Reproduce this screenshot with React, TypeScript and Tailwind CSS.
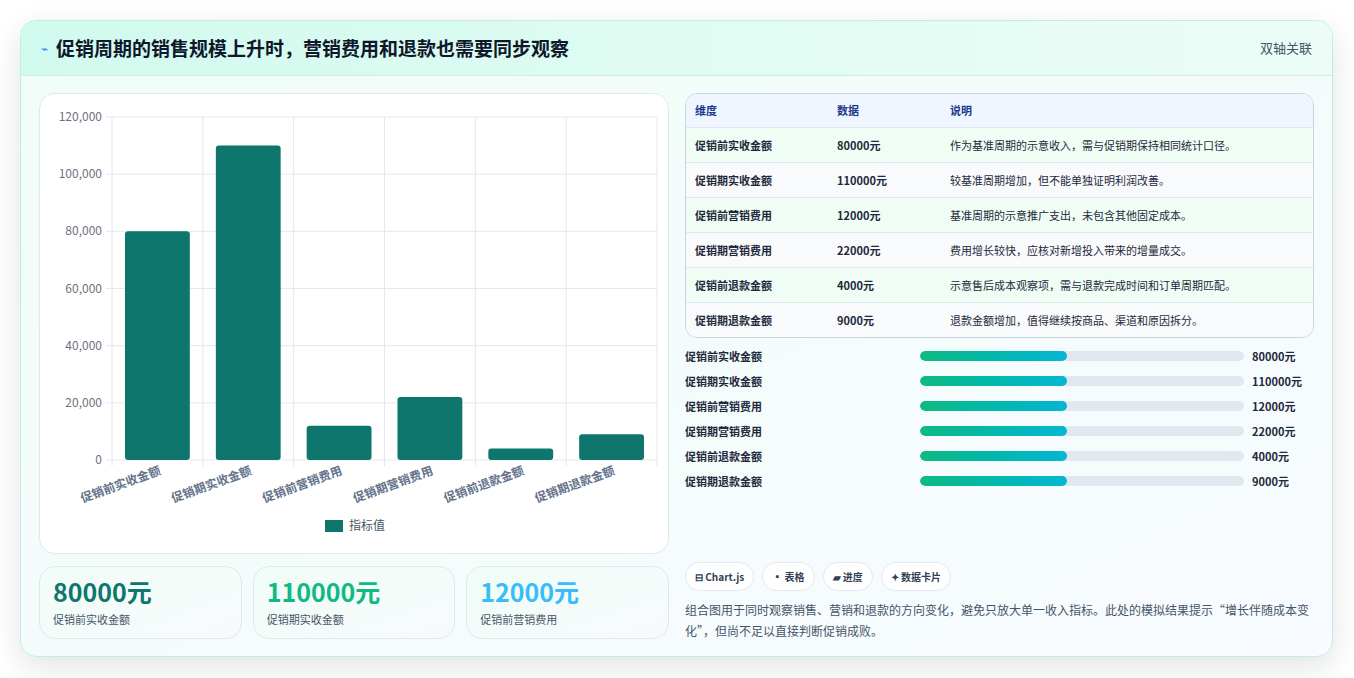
import React from 'react';

const rows = [
  { k: '促销前实收金额', v: 80000, d: '作为基准周期的示意收入，需与促销期保持相同统计口径。' },
  { k: '促销期实收金额', v: 110000, d: '较基准周期增加，但不能单独证明利润改善。' },
  { k: '促销前营销费用', v: 12000, d: '基准周期的示意推广支出，未包含其他固定成本。' },
  { k: '促销期营销费用', v: 22000, d: '费用增长较快，应核对新增投入带来的增量成交。' },
  { k: '促销前退款金额', v: 4000, d: '示意售后成本观察项，需与退款完成时间和订单周期匹配。' },
  { k: '促销期退款金额', v: 9000, d: '退款金额增加，值得继续按商品、渠道和原因拆分。' },
];

const font = { fontFamily: '"Noto Sans CJK SC", "Noto Sans", sans-serif' };

const Chart = () => {
  const x0 = 72, x1 = 617, yTop = 23, y0 = 366;
  const cw = (x1 - x0) / 6;
  const sy = (v: number) => y0 - (v / 120000) * (y0 - yTop);
  return (
    <svg width="629" height="460" style={font}>
      {[0, 20000, 40000, 60000, 80000, 100000, 120000].map((t) => (
        <g key={t}>
          <line x1={x0 - 6} x2={x1} y1={sy(t)} y2={sy(t)} stroke="#e5e7eb" />
          <text x={x0 - 10} y={sy(t) + 4} textAnchor="end" fontSize="12" fill="#6b7280">
            {t.toLocaleString('en-US')}
          </text>
        </g>
      ))}
      {Array.from({ length: 7 }).map((_, i) => (
        <line key={i} x1={x0 + i * cw} x2={x0 + i * cw} y1={yTop} y2={y0 + 6} stroke="#e5e7eb" />
      ))}
      {rows.map((r, i) => (
        <g key={r.k}>
          <rect x={x0 + i * cw + 13} y={sy(r.v)} width={cw - 26} height={y0 - sy(r.v)} rx="3" fill="#0f766e" />
          <text
            transform={`translate(${x0 + i * cw + cw / 2 + 4},${y0 + 14}) rotate(-20)`}
            textAnchor="end"
            fontSize="12"
            fontWeight="700"
            fill="#64748b"
          >
            {r.k}
          </text>
        </g>
      ))}
      <rect x="285" y="426" width="18" height="12" fill="#0f766e" />
      <text x="309" y="436" fontSize="12" fill="#475569">指标值</text>
    </svg>
  );
};

export default function App() {
  return (
    <div className="w-[1354px] h-[678px] bg-white pt-5 px-5" style={font}>
      <div className="w-[1313px] h-[637px] rounded-2xl border border-[#bfeee3] bg-gradient-to-br from-[#f0fdf7] to-[#f8fbff] shadow-[0_10px_30px_rgba(15,23,42,0.12)] overflow-hidden">
        <div className="h-[55px] flex items-center justify-between px-5 bg-gradient-to-r from-[#d1faee] to-[#ecfdf7] border-b border-[#cdeee5]">
          <div className="flex items-center gap-2">
            <span className="text-[#3b82f6] text-xs">⌁</span>
            <h1 className="text-[19px] font-bold text-[#0f172a]">促销周期的销售规模上升时，营销费用和退款也需要同步观察</h1>
          </div>
          <span className="text-[13px] text-[#475569]">双轴关联</span>
        </div>
        <div className="flex gap-4 px-[18px] pt-[17px]">
          <div className="w-[630px] flex flex-col gap-3">
            <div className="h-[461px] bg-white rounded-2xl border border-[#e2e8f0]">
              <Chart />
            </div>
            <div className="flex gap-[11px]">
              {[
                ['80000元', '促销前实收金额', 'text-[#0f766e]'],
                ['110000元', '促销期实收金额', 'text-[#10b981]'],
                ['12000元', '促销前营销费用', 'text-[#38bdf8]'],
              ].map(([v, l, c]) => (
                <div key={l} className="w-[203px] h-[73px] rounded-2xl border border-[#e2e8f0] bg-gradient-to-br from-[#f0fdf7] to-[#f8fafc] px-[13px] pt-2">
                  <div className={`text-[25px] font-bold leading-8 ${c}`}>{v}</div>
                  <div className="text-[11px] text-[#475569] mt-1">{l}</div>
                </div>
              ))}
            </div>
          </div>
          <div className="w-[630px] flex flex-col">
            <div className="rounded-xl border border-[#cbd5e1] overflow-hidden text-[11px] bg-white">
              <div className="flex h-[33px] items-center bg-[#eff6ff] text-[#1e3a8a] font-bold">
                <div className="w-[151px] pl-[9px]">维度</div>
                <div className="w-[113px]">数据</div>
                <div>说明</div>
              </div>
              {rows.map((r, i) => (
                <div key={r.k} className={`flex h-[35px] items-center border-t border-[#e2e8f0] text-[#1e293b] ${i % 2 === 0 ? 'bg-[#f0fdf4]' : 'bg-[#f8fafc]'}`}>
                  <div className="w-[151px] pl-[9px] font-bold">{r.k}</div>
                  <div className="w-[113px] font-bold">{r.v}元</div>
                  <div>{r.d}</div>
                </div>
              ))}
            </div>
            <div className="flex flex-col mt-[9px] gap-[7px]">
              {rows.map((r) => (
                <div key={r.k} className="flex items-center h-[18px] text-[11px] font-bold text-[#1e293b]">
                  <div className="w-[235px]">{r.k}</div>
                  <div className="w-[324px] h-[10px] rounded-full bg-[#e2e8f0] overflow-hidden">
                    <div className="w-[147px] h-full rounded-full bg-gradient-to-r from-[#10b981] to-[#06b6d4]" />
                  </div>
                  <div className="ml-[8px]">{r.v}元</div>
                </div>
              ))}
            </div>
            <div className="flex gap-2 mt-[72px]">
              {['⊟ Chart.js', '▪ 表格', '▰ 进度', '✦ 数据卡片'].map((t) => (
                <span key={t} className="h-[29px] px-[9px] flex items-center rounded-full border border-[#e2e8f0] bg-white text-[10px] font-bold text-[#334155]">
                  {t}
                </span>
              ))}
            </div>
            <p className="mt-[8px] text-[12px] leading-[21px] text-[#475569]">
              组合图用于同时观察销售、营销和退款的方向变化，避免只放大单一收入指标。此处的模拟结果提示“增长伴随成本变化”，但尚不足以直接判断促销成败。
            </p>
          </div>
        </div>
      </div>
    </div>
  );
}
